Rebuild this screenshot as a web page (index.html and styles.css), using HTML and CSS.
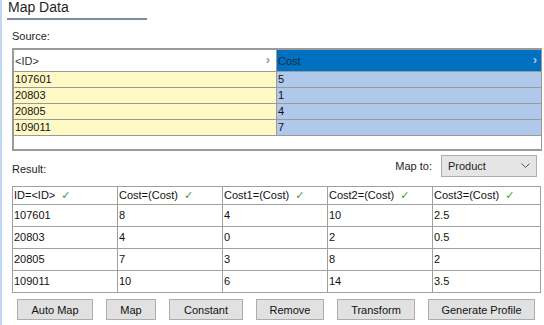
FILE: index.html
```html
<!DOCTYPE html>
<html lang="en">
<head>
  <meta charset="UTF-8">
  <title>Map Data</title>
  <link rel="stylesheet" href="styles.css">
</head>
<body>
  <div class="panel">
    <h1 class="title">Map Data</h1>

    <!-- SOURCE -->
    <div class="label source-label">Source:</div>
    <div class="source-box">
      <div class="source-grid">
        <div class="src-head src-id">&lt;ID&gt;<span class="arrow">&#x203A;</span></div>
        <div class="src-head src-cost">Cost<span class="arrow">&#x203A;</span></div>
        <div class="src-cell id">107601</div><div class="src-cell val">5</div>
        <div class="src-cell id">20803</div><div class="src-cell val">1</div>
        <div class="src-cell id">20805</div><div class="src-cell val">4</div>
        <div class="src-cell id">109011</div><div class="src-cell val">7</div>
      </div>
    </div>

    <!-- RESULT -->
    <div class="result-bar">
      <div class="label">Result:</div>
      <div class="map-to">
        <span>Map to:</span>
        <div class="select">Product
          <svg width="9" height="6" viewBox="0 0 9 6"><path d="M0.5 0.5 L4.5 4.5 L8.5 0.5" fill="none" stroke="#555" stroke-width="1"/></svg>
        </div>
      </div>
    </div>
    <div class="result-grid">
      <div class="res-head">ID=&lt;ID&gt; <span class="ok">&#x2713;</span></div>
      <div class="res-head">Cost=(Cost) <span class="ok">&#x2713;</span></div>
      <div class="res-head">Cost1=(Cost) <span class="ok">&#x2713;</span></div>
      <div class="res-head">Cost2=(Cost) <span class="ok">&#x2713;</span></div>
      <div class="res-head">Cost3=(Cost) <span class="ok">&#x2713;</span></div>

      <div class="res-cell">107601</div><div class="res-cell">8</div><div class="res-cell">4</div><div class="res-cell">10</div><div class="res-cell">2.5</div>
      <div class="res-cell">20803</div><div class="res-cell">4</div><div class="res-cell">0</div><div class="res-cell">2</div><div class="res-cell">0.5</div>
      <div class="res-cell">20805</div><div class="res-cell">7</div><div class="res-cell">3</div><div class="res-cell">8</div><div class="res-cell">2</div>
      <div class="res-cell">109011</div><div class="res-cell">10</div><div class="res-cell">6</div><div class="res-cell">14</div><div class="res-cell">3.5</div>
    </div>

    <!-- BUTTONS -->
    <div class="buttons">
      <button class="btn w-auto">Auto Map</button>
      <button class="btn w-map">Map</button>
      <button class="btn w-const">Constant</button>
      <button class="btn w-remove">Remove</button>
      <button class="btn w-transform">Transform</button>
      <button class="btn w-profile">Generate Profile</button>
    </div>
  </div>
</body>
</html>
```

FILE: styles.css
```css
/* ---------- BASE ---------- */
* {
  margin: 0;
  padding: 0;
  box-sizing: border-box;
  font-family: 'Liberation Sans', Arial, sans-serif;
}
body {
  background: #fff;
  color: #000;
  width: 544px;
  height: 325px;
  overflow: hidden;
}
.panel {
  height: 325px;
  border-left: 2px solid #c2d5ee;
  padding-left: 10px;
  padding-right: 2px;
}

/* ---------- TITLE ---------- */
.title {
  font-size: 14px;
  font-weight: normal;
  color: #1e1e1e;
  width: 140px;
  margin-left: -5px;
  padding-left: 1px;
  height: 20px;
  line-height: 15px;
  border-bottom: 2px solid #7d8ca6;
}
.label {
  font-size: 11px;
  color: #1e1e1e;
}
.source-label {
  margin-top: 10px;
  height: 18px;
}

/* ---------- SOURCE ---------- */
.source-box {
  height: 103px;
  border: 2px solid #9a9a9a;
  border-right-width: 1px;
  background: #fff;
}
.source-grid {
  display: grid;
  grid-template-columns: 262px 265px;
  grid-auto-rows: 16px;
  grid-template-rows: 22px;
  font-size: 11px;
}
.src-head {
  position: relative;
  line-height: 22px;
  padding-left: 1px;
  border-bottom: 1px solid #9a9a9a;
  color: #333;
}
.src-id {
  background: #fff;
}
.src-cost {
  background: #0070c0;
  color: #1d2c3c;
  border-left: 1px solid #9a9a9a;
}
.arrow {
  position: absolute;
  right: 6px;
  top: -1px;
  font-size: 13px;
  color: #9a9a9a;
  font-weight: bold;
}
.src-cost .arrow {
  color: #b8c4d4;
  right: 4px;
}
.src-cell {
  line-height: 15px;
  padding-left: 1px;
  border-bottom: 1px solid #9a9a9a;
  color: #111;
}
.src-cell.id {
  background: #fff9c6;
}
.src-cell.val {
  background: #b0c9ea;
  border-left: 1px solid #9a9a9a;
}

/* ---------- RESULT ---------- */
.result-bar {
  display: flex;
  justify-content: space-between;
  align-items: flex-start;
  height: 35px;
  padding-top: 4px;
}
.result-bar .label {
  margin-top: 8px;
}
.map-to {
  display: flex;
  align-items: center;
  gap: 9px;
  font-size: 11px;
  color: #1e1e1e;
  margin-right: 5px;
}
.select {
  display: flex;
  justify-content: space-between;
  align-items: center;
  width: 96px;
  height: 22px;
  padding: 0 6px 0 6px;
  background: #e5e5e5;
  border: 1px solid #adadad;
  font-size: 11px;
}
.result-grid {
  display: grid;
  grid-template-columns: 105px 105px 105px 105px 108px;
  grid-template-rows: 18px;
  grid-auto-rows: 22px;
  border-top: 1px solid #a0a0a0;
  border-left: 1px solid #a0a0a0;
  width: 529px;
  font-size: 11px;
}
.res-head,
.res-cell {
  border-right: 1px solid #a0a0a0;
  border-bottom: 1px solid #a0a0a0;
  padding-left: 1px;
  color: #111;
}
.res-head {
  line-height: 16px;
}
.res-cell {
  line-height: 20px;
}
.ok {
  color: #3c9a3c;
  font-size: 11px;
  font-family: 'DejaVu Sans', sans-serif;
  margin-left: 3px;
}

/* ---------- BUTTONS ---------- */
.buttons {
  display: flex;
  gap: 13px;
  margin-top: 6px;
  padding-left: 5px;
}
.btn {
  height: 21px;
  background: #e1e1e1;
  border: 1px solid #adadad;
  font-size: 11px;
  color: #111;
}
.w-auto { width: 76px; }
.w-map { width: 50px; }
.w-const { width: 74px; }
.w-remove { width: 68px; }
.w-transform { width: 78px; }
.w-profile { width: 107px; }
```
